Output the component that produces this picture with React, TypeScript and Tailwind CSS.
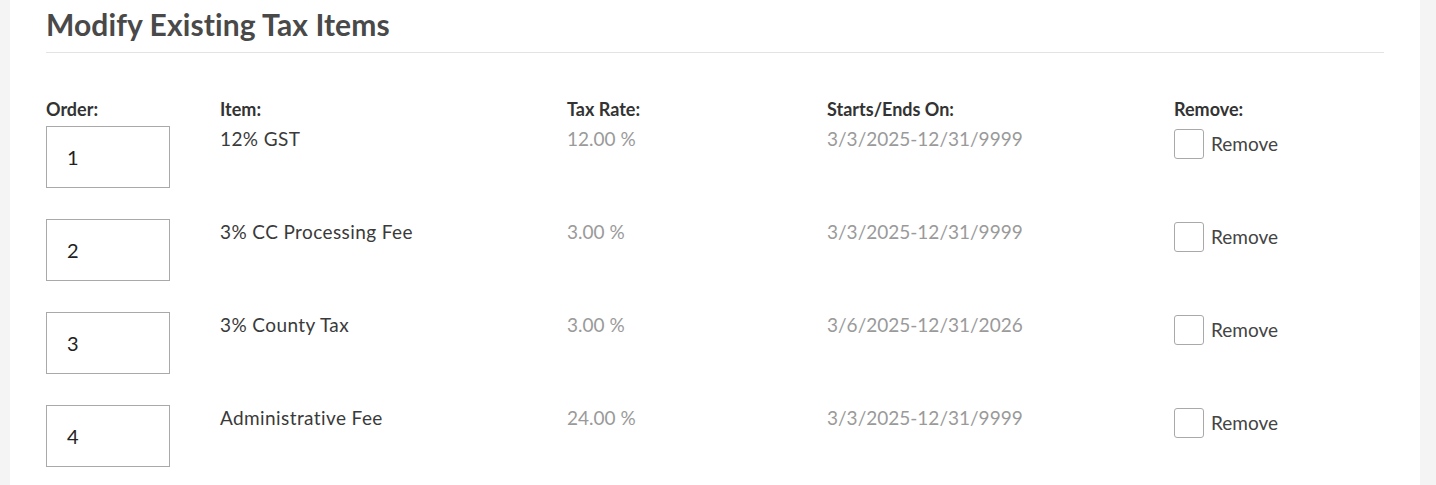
import React from "react";

const rows = [
  { order: "1", item: "12% GST", rate: "12.00 %", dates: "3/3/2025-12/31/9999" },
  { order: "2", item: "3% CC Processing Fee", rate: "3.00 %", dates: "3/3/2025-12/31/9999" },
  { order: "3", item: "3% County Tax", rate: "3.00 %", dates: "3/6/2025-12/31/2026" },
  { order: "4", item: "Administrative Fee", rate: "24.00 %", dates: "3/3/2025-12/31/9999" },
];

const grid = "grid grid-cols-[174px_347px_260px_347px_1fr]";

export default function App() {
  return (
    <div
      className="min-h-[485px] bg-[#f4f4f4] pl-[10px] pr-[16px]"
      style={{ fontFamily: "Lato, 'Open Sans', sans-serif" }}
    >
      <div className="bg-white min-h-[485px] px-[36px]">
        <h1 className="pt-[8px] pb-[12px] text-[30px] leading-[32px] font-bold text-[#494949] tracking-[0.1px] border-b border-[#e3e3e3]">
          Modify Existing Tax Items
        </h1>
        <div className={`${grid} mt-[46px] text-[18px] leading-[20px] font-bold text-[#333]`}>
          <div>Order:</div>
          <div>Item:</div>
          <div>Tax Rate:</div>
          <div>Starts/Ends On:</div>
          <div>Remove:</div>
        </div>
        <div className="mt-[7px]">
          {rows.map((r) => (
            <div key={r.order} className={`${grid} mb-[31px] text-[19px] leading-[24px]`}>
              <div>
                <input
                  defaultValue={r.order}
                  className="w-[124px] h-[62px] border border-[#a9a9a9] pl-[20px] text-[20px] text-[#222] outline-none"
                  style={{ fontFamily: "Lato, 'Open Sans', sans-serif" }}
                />
              </div>
              <div className="pt-[1px] text-[#3a3a3a] tracking-[0.4px]">{r.item}</div>
              <div className="pt-[1px] text-[#9a9a9a]">{r.rate}</div>
              <div className="pt-[1px] text-[#9a9a9a]">{r.dates}</div>
              <div className="pt-[3px]">
                <label className="flex items-center gap-[7px] text-[#444]">
                  <span className="w-[30px] h-[30px] border border-[#a9a9a9] rounded-[3px] bg-white" />
                  Remove
                </label>
              </div>
            </div>
          ))}
        </div>
      </div>
    </div>
  );
}
